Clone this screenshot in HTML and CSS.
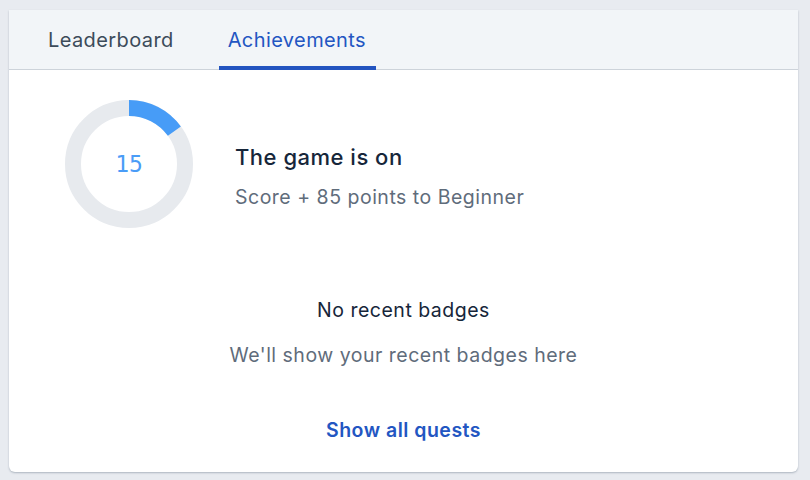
FILE: index.html
```html
<!DOCTYPE html>
<html lang="en">
<head>
    <meta charset="UTF-8">
    <meta name="viewport" content="width=device-width, initial-scale=1.0">
    <title>Achievements</title>
    <link rel="stylesheet" href="styles.css">
</head>
<body>
    <div class="card">
        <nav class="tabs">
            <a class="tab">Leaderboard</a>
            <a class="tab active">Achievements</a>
        </nav>
        <div class="content">
            <div class="level">
                <div class="ring">
                    <svg width="128" height="128" viewBox="0 0 128 128">
                        <circle cx="64" cy="64" r="56" fill="none" stroke="#e7eaee" stroke-width="16"/>
                        <circle cx="64" cy="64" r="56" fill="none" stroke="#479cf7" stroke-width="16"
                            stroke-dasharray="52.8 400" transform="rotate(-90 64 64)"/>
                    </svg>
                    <span class="points">15</span>
                </div>
                <div class="level-text">
                    <h3>The game is on</h3>
                    <p>Score + 85 points to Beginner</p>
                </div>
            </div>
            <div class="badges">
                <h4>No recent badges</h4>
                <p>We'll show your recent badges here</p>
            </div>
            <a class="quests">Show all quests</a>
        </div>
    </div>
</body>
</html>
```

FILE: styles.css
```css
*{
    margin: 0;
    padding: 0;
    box-sizing: border-box;
}
body
{
    background-color: #e8ebf0;
    font-family: Inter, "Liberation Sans", sans-serif;
    padding: 10px 12px 8px 9px;
    height: 480px;
}
.card
{
    background-color: white;
    border-radius: 0 0 6px 6px;
    box-shadow: 0 1px 2px rgba(60, 80, 100, 0.35);
    height: 462px;
}
.tabs
{
    height: 60px;
    background-color: #f2f5f8;
    border-bottom: 1px solid #cdd3da;
    display: flex;
    padding-left: 30px;
    gap: 35px;
}
.tab
{
    font-size: 20px;
    letter-spacing: 0.4px;
    color: #3c4b5a;
    padding: 0 10px 0 9px;
    display: flex;
    align-items: center;
    margin-bottom: -1px;
    border-bottom: 4px solid transparent;
    padding-top: 3px;
}
.tab.active
{
    color: #2356c2;
    border-bottom-color: #2354c0;
    border-radius: 3px 3px 0 0;
}
.content
{
    display: flex;
    flex-direction: column;
}
.level
{
    display: flex;
    align-items: flex-start;
    padding: 30px 0 0 56px;
    gap: 42px;
}
.ring
{
    position: relative;
    width: 128px;
    height: 128px;
}
.ring svg
{
    display: block;
}
.points
{
    position: absolute;
    inset: 0;
    display: flex;
    justify-content: center;
    align-items: center;
    font-family: "DejaVu Sans Mono", monospace;
    font-size: 23px;
    color: #4a9cf7;
}
.level-text
{
    margin-top: 44px;
}
.level-text h3
{
    font-size: 22px;
    font-weight: 500;
    letter-spacing: 0.5px;
    color: #16263a;
    margin-bottom: 15px;
}
.level-text p
{
    font-size: 19.5px;
    letter-spacing: 0.5px;
    color: #5f6c7b;
}
.badges
{
    text-align: center;
    margin-top: 70px;
    letter-spacing: 0.5px;
}
.badges h4
{
    font-size: 19.5px;
    font-weight: 400;
    color: #16263a;
    margin-bottom: 21px;
}
.badges p
{
    font-size: 19.5px;
    color: #5f6c7b;
}
.quests
{
    align-self: center;
    margin-top: 51px;
    font-size: 19.5px;
    letter-spacing: 0.5px;
    font-weight: 600;
    color: #2356c2;
}
```
